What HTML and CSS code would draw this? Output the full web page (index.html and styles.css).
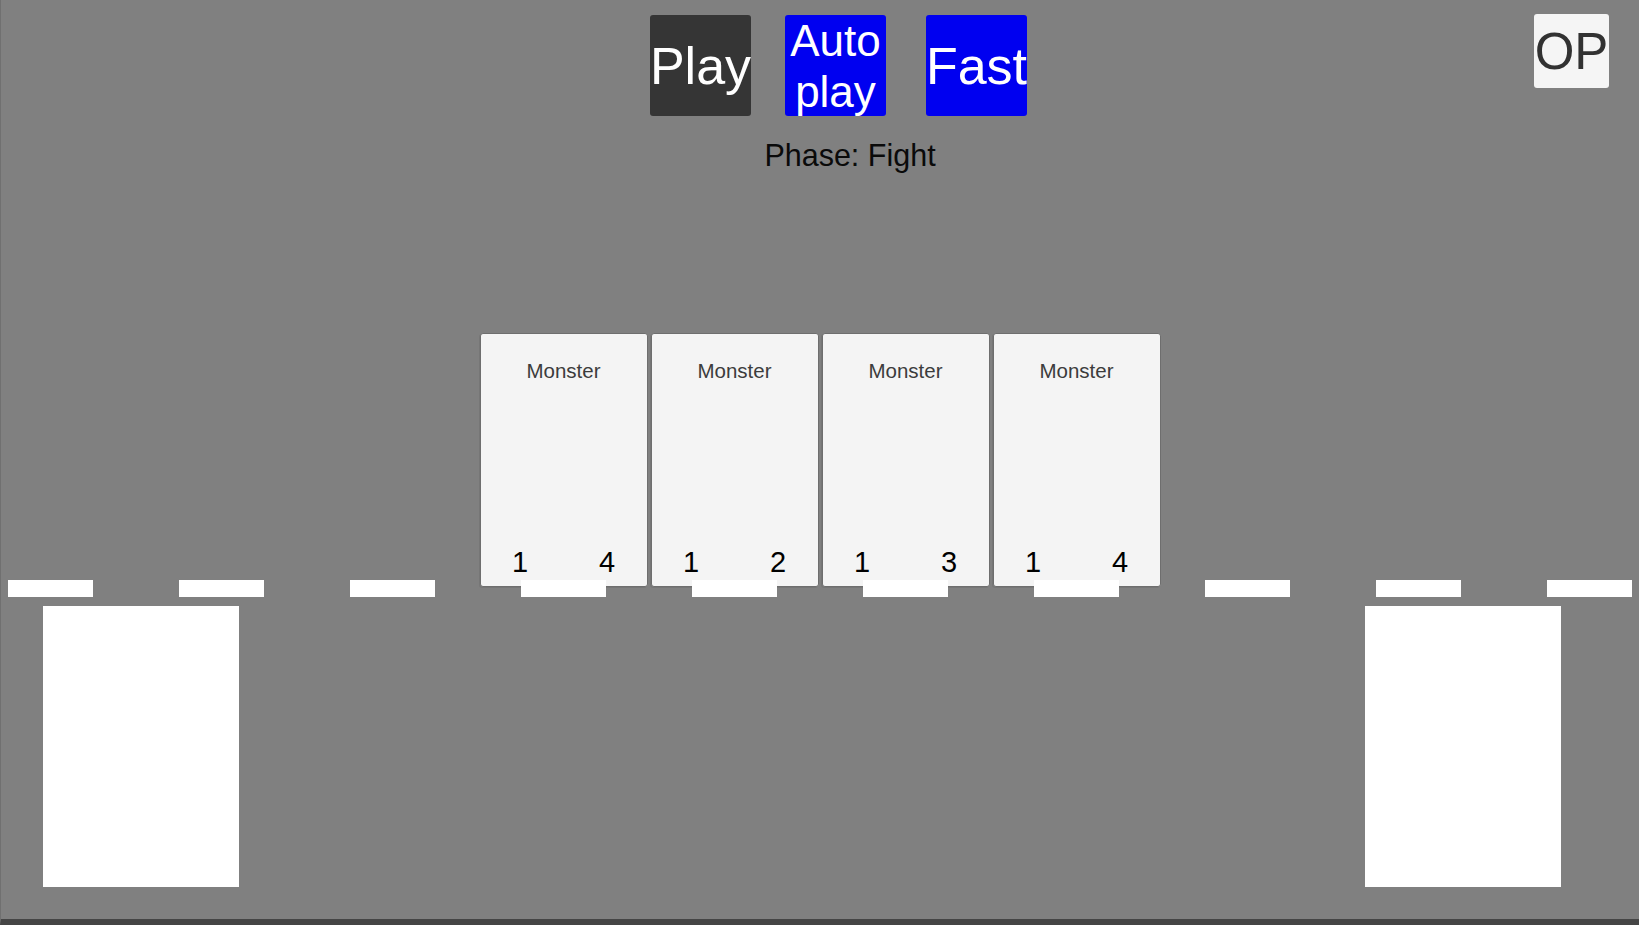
FILE: index.html
```html
<!DOCTYPE html>
<html>
<head>
  <title>Card Battle</title>
  <link rel="stylesheet" href="styles.css">
</head>
<body>
  <div class="board">
    <div class="controls">
      <button class="btn btn-play">Play</button>
      <button class="btn btn-auto"><span>Auto<br>play</span></button>
      <button class="btn btn-fast">Fast</button>
      <button class="btn-op">OP</button>
    </div>

    <div class="phase">Phase: Fight</div>

    <div class="field">
      <div class="card">
        <div class="card-name">Monster</div>
        <div class="card-stats"><span>1</span><span>4</span></div>
      </div>
      <div class="card">
        <div class="card-name">Monster</div>
        <div class="card-stats"><span>1</span><span>2</span></div>
      </div>
      <div class="card">
        <div class="card-name">Monster</div>
        <div class="card-stats"><span>1</span><span>3</span></div>
      </div>
      <div class="card">
        <div class="card-name">Monster</div>
        <div class="card-stats"><span>1</span><span>4</span></div>
      </div>
    </div>

    <div class="slots">
      <div class="slot"></div>
      <div class="slot"></div>
      <div class="slot"></div>
      <div class="slot"></div>
      <div class="slot"></div>
      <div class="slot"></div>
      <div class="slot"></div>
      <div class="slot"></div>
      <div class="slot"></div>
      <div class="slot"></div>
    </div>

    <div class="decks">
      <div class="deck"></div>
      <div class="deck"></div>
    </div>
  </div>
</body>
</html>
```

FILE: styles.css
```css
* {
  margin: 0;
  padding: 0;
  box-sizing: border-box;
}

html, body {
  width: 100%;
  height: 100%;
  overflow: hidden;
  background: #808080;
}

.board {
  height: 925px;
  display: flex;
  flex-direction: column;
  border-left: 1px solid #707070;
  border-bottom: 6px solid #454545;
  font-family: 'Liberation Sans', Arial, sans-serif;
}

/* Top controls */
.controls {
  display: flex;
  align-items: flex-start;
  padding-top: 15px;
  padding-left: 649px;
}

.btn {
  width: 101px;
  height: 101px;
  border: none;
  border-radius: 3px;
  color: #FFFFFF;
  font-family: inherit;
  font-size: 52px;
  line-height: 52px;
  white-space: nowrap;
  display: flex;
  align-items: center;
  justify-content: center;
  overflow: visible;
  cursor: pointer;
}

.btn-play {
  background: #353535;
}

.btn-auto {
  background: #0000F0;
  margin-left: 34px;
  font-size: 44px;
  line-height: 51px;
  overflow: hidden;
}

.btn-fast {
  background: #0000F0;
  margin-left: 40px;
}

.btn-op {
  margin-left: auto;
  margin-right: 30px;
  margin-top: -1px;
  width: 75px;
  height: 74px;
  border: none;
  border-radius: 3px;
  background: #F5F5F5;
  color: #323232;
  font-family: inherit;
  font-size: 51px;
  line-height: 51px;
  display: flex;
  align-items: center;
  justify-content: center;
  white-space: nowrap;
}

.phase {
  margin-top: 22px;
  padding-left: 60px;
  text-align: center;
  font-size: 30.5px;
  line-height: 34px;
  color: #0A0A0A;
}

/* Cards on the field */
.field {
  margin-top: 161px;
  display: flex;
  justify-content: center;
  gap: 3px;
}

.card {
  width: 168px;
  height: 254px;
  background: #F4F4F4;
  border: 1px solid #6E6E6E;
  border-radius: 3px;
  box-shadow: -1px 1px 0 rgba(0, 0, 0, 0.08);
  display: flex;
  flex-direction: column;
  justify-content: space-between;
}

.card-name {
  padding-top: 25px;
  text-align: center;
  font-size: 20.5px;
  line-height: 23px;
  color: #3C3C3C;
}

.card-stats {
  display: grid;
  grid-template-columns: 1fr 1fr;
  margin: 0 -4px 7px;
  font-size: 29px;
  line-height: 33px;
  color: #000;
  text-align: center;
}

/* Slot markers */
.slots {
  position: relative;
  z-index: 1;
  margin-top: -7px;
  display: flex;
  justify-content: center;
  gap: 86px;
}

.slot {
  width: 85px;
  height: 17px;
  background: #FFFFFF;
}

/* Decks */
.decks {
  margin-top: 9px;
  display: flex;
  justify-content: space-between;
  padding: 0 78px 0 42px;
}

.deck {
  width: 196px;
  height: 281px;
  background: #FFFFFF;
}
```
